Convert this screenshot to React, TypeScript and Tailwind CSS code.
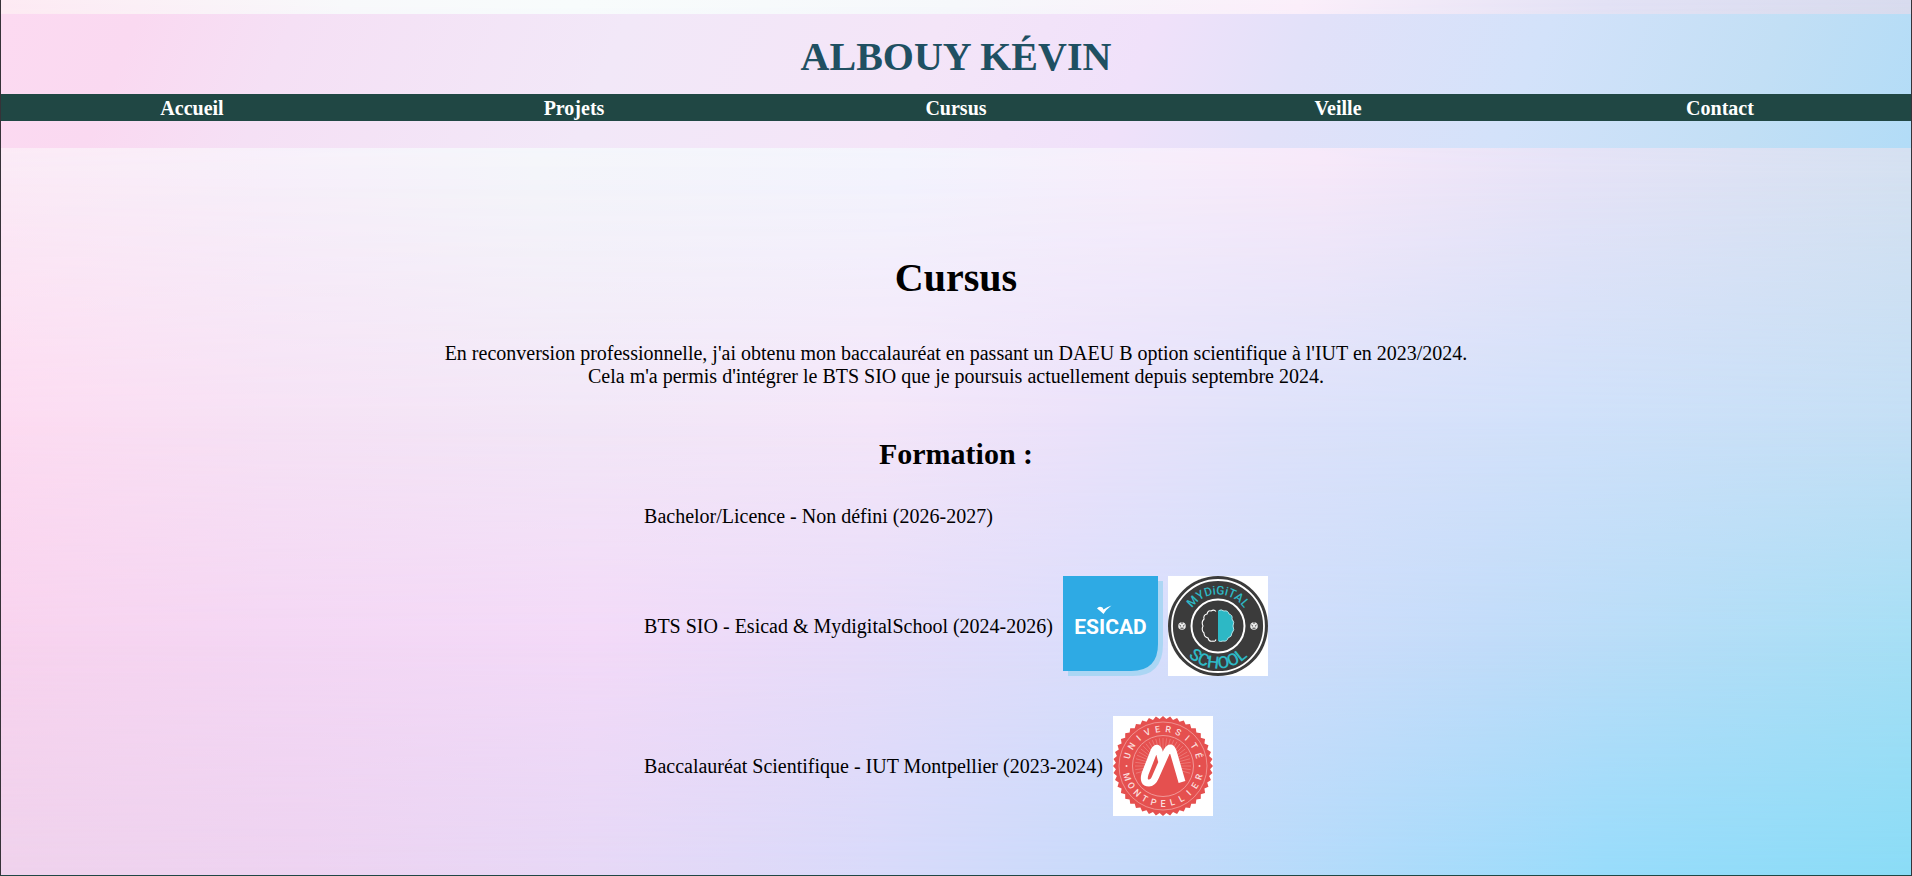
const links = ["Accueil", "Projets", "Cursus", "Veille", "Contact"];

const point = (radius: number, degrees: number) => {
  const a = (degrees * Math.PI) / 180;
  return `${(50 + radius * Math.sin(a)).toFixed(2)},${(50 - radius * Math.cos(a)).toFixed(2)}`;
};

const sealOutline = Array.from({ length: 88 }, (_, i) => point(i % 2 ? 47.2 : 50, (i * 360) / 88)).join(" ");

function Backdrop() {
  return (
    <div aria-hidden="true" className="absolute inset-0 -z-10">
      <div className="absolute inset-0 bg-[linear-gradient(90deg,#fdeaf3_0%,#f8f9fb_18%,#f8fcfc_30%,#f6f8fb_50%,#fbeffa_68%,#e3e2f5_84%,#d8dbee_100%)]" />
      <div className="absolute inset-0 bg-[linear-gradient(90deg,#fbeaf6_0%,#f7effa_14%,#f4f5fa_28%,#f3f3fd_47%,#f6edfb_60%,#f6e8f9_69%,#e6e3f7_82%,#d4e1f1_100%)] [mask-image:linear-gradient(180deg,transparent_0%,black_20%)]" />
      <div className="absolute inset-0 bg-[linear-gradient(90deg,#fddbf1_0%,#f6e2f5_14%,#f2e7f7_30%,#f4e6f9_46%,#ece2fa_56%,#dfe2fa_66%,#d0e1fa_82%,#c4dff5_100%)] [mask-image:linear-gradient(180deg,transparent_20%,black_48%)]" />
      <div className="absolute inset-0 bg-[linear-gradient(90deg,#f8d3ee_0%,#f4d7f4_14%,#f3daf8_31%,#e7dcf9_45%,#d8defc_60%,#c2dcf9_78%,#a6dff5_100%)] [mask-image:linear-gradient(180deg,transparent_48%,black_73%)]" />
      <div className="absolute inset-0 bg-[linear-gradient(90deg,#efd2ec_0%,#edd3f1_16%,#e6d8f6_31%,#d8dafa_46%,#c3dafa_61%,#98dcfb_84%,#8adcf6_100%)] [mask-image:linear-gradient(180deg,transparent_73%,black_100%)]" />
    </div>
  );
}

function EsicadLogo() {
  return (
    <svg role="img" aria-label="Esicad" viewBox="0 0 100 100" className="size-25 shrink-0">
      <path d="M5 5H100V68Q100 100 70 100H5Z" fill="#abd6f4" />
      <path d="M0 0H95V68Q95 95 68 95H0Z" fill="#2eaae4" />
      <text x="47.5" y="57.5" textAnchor="middle" fill="#fff" className="font-[Roboto,sans-serif] text-[21px] font-bold">
        ESICAD
      </text>
      <path d="M34 32.5Q36 29.5 39.5 31.5L40.5 33.5Q44 31 48.500 29.500Q43 33.500 40.500 38Q38 35.500 34 32.500Z" fill="#fff" />
    </svg>
  );
}

function SchoolBadge({ x }: { x: number }) {
  return (
    <g transform={`translate(${x} 50)`}>
      <circle r="3.800" fill="#e9e9e9" />
      <path d="M-2.500 -1L-1 .3M2.500 -1L1 .3M-1.500 2.200H1.500M0 -3.800V-2" stroke="#3b3b3b" strokeWidth="1" />
    </g>
  );
}

function SchoolLogo() {
  return (
    <svg role="img" aria-label="MyDigital School" viewBox="0 0 100 100" className="size-25 shrink-0 bg-white">
      <circle cx="50" cy="50" r="50" fill="#3b3b3b" />
      <circle cx="50" cy="50" r="46" fill="none" stroke="#fff" strokeWidth="1.800" />
      <circle cx="50" cy="50" r="26.500" fill="none" stroke="#fff" strokeWidth="2" />
      <path id="school-top" d="M18.500 50A31.500 31.500 0 0 1 81.500 50" fill="none" />
      <path id="school-bottom" d="M7.500 50A42.500 42.500 0 0 0 92.500 50" fill="none" />
      <text textAnchor="middle" fill="#2db8c5" className="font-[Roboto,sans-serif] text-[12px] font-medium">
        <textPath href="#school-top" startOffset="50%">MYDiGiTAL</textPath>
      </text>
      <text textAnchor="middle" fill="#2db8c5" className="font-[Roboto,sans-serif] text-[17px] font-medium">
        <textPath href="#school-bottom" startOffset="50%">SCHOOL</textPath>
      </text>
      <SchoolBadge x={14} />
      <SchoolBadge x={86} />
      <path
        d="M48 35.500Q46 33 43 35Q40 34 39 38Q35 39 36 43Q33 46 35 50Q33 54 36 57Q36 61 40 62Q41 66 45 65Q47 66 48 63.500"
        fill="none"
        stroke="#fff"
        strokeWidth="1.100"
      />
      <path
        d="M50 34.500Q53 33 56 35Q60 34 61 38Q65 39 64 43Q67 46 65 50Q67 54 64 57Q64 61 60 62Q59 66 55 65Q52 66 50 65Z"
        fill="#2db8c5"
      />
      <path
        d="M51 34.500Q53 33 56 35Q60 34 61 38Q65 39 64 43Q67 46 65 50Q67 54 64 57Q64 61 60 62Q59 66 55 65Q52 66 51 65"
        fill="none"
        stroke="#d5f1f4"
        strokeWidth=".8"
      />
    </svg>
  );
}

function MontpellierLogo() {
  return (
    <svg role="img" aria-label="Université Montpellier" viewBox="0 0 100 100" className="size-25 shrink-0 bg-white">
      <polygon points={sealOutline} fill="#e5504f" />
      <circle cx="50" cy="50" r="44" fill="none" stroke="#f3aaa9" strokeWidth=".7" />
      <circle cx="50" cy="50" r="30.500" fill="none" stroke="#f3aaa9" strokeWidth=".8" />
      {Array.from({ length: 29 }, (_, i) => (
        <path key={i} d="M50 22V36" transform={`rotate(${i * 7.5 - 105} 50 50)`} stroke="#ed8180" strokeWidth=".7" />
      ))}
      <g fill="#fbdedd" textAnchor="middle" className="font-[Roboto,sans-serif] text-[9px] font-medium">
        {"UNIVERSITÉ".split("").map((letter, i) => (
          <text key={i} x="50" y="16" transform={`rotate(${i * 16.4 - 74} 50 50)`}>
            {letter}
          </text>
        ))}
        {"MONTPELLIER".split("").map((letter, i) => (
          <text key={i} x="50" y="90.500" transform={`rotate(${73 - i * 14.6} 50 50)`}>
            {letter}
          </text>
        ))}
        <circle cx="13.500" cy="50" r="1" />
        <circle cx="86.500" cy="50" r="1" />
      </g>
      <path
        d="M48.500 45L46 35Q44 29.500 41 35L32 58Q29.500 67 36 67Q40 67 42.500 61L54 35Q57.500 29 60 35L69 66"
        fill="none"
        stroke="#fff"
        strokeWidth="7"
        strokeLinejoin="round"
      />
    </svg>
  );
}

export default function App() {
  return (
    <div className="relative isolate flex min-h-screen flex-col border-x border-b border-x-[#363238] border-b-[#204744] pt-3.5 font-['Liberation_Serif','Times_New_Roman',serif] text-[20px] leading-[23px] text-black">
      <Backdrop />
      <header className="bg-[linear-gradient(112deg,#fcdaf1_0%,#fad9f1_7%,#f5e0f5_15%,#f2e8f8_32%,#f4e5f8_48%,#f0e1fa_59%,#e2e1f9_67%,#d3e2fa_79%,#c2dff5_91%,#b2dcf7_100%)] pt-5 pb-[27px]">
        <h1 className="text-center text-[40px] leading-[46px] font-bold text-[#1f5062]">ALBOUY KÉVIN</h1>
        <nav className="mt-3.5 bg-[#204744] pt-[3px] pb-px">
          <ul className="grid grid-cols-5 text-center font-bold text-white">
            {links.map((link) => (
              <li key={link}>
                <a href={`#${link.toLowerCase()}`}>{link}</a>
              </li>
            ))}
          </ul>
        </nav>
      </header>
      <main className="flex flex-col items-center px-4 pt-[107px] pb-14">
        <h2 className="text-[40px] leading-[46px] font-bold">Cursus</h2>
        <p className="mt-[41px] text-center">
          En reconversion professionnelle, j'ai obtenu mon baccalauréat en passant un DAEU B option scientifique à l'IUT en
          2023/2024.
          <br />
          Cela m'a permis d'intégrer le BTS SIO que je poursuis actuellement depuis septembre 2024.
        </p>
        <h3 className="mt-[49px] text-[30px] leading-[34px] font-bold">Formation :</h3>
        <ul className="mt-[34px] flex flex-col gap-10">
          <li className="mb-2">Bachelor/Licence - Non défini (2026-2027)</li>
          <li className="flex items-center gap-2.5">
            BTS SIO - Esicad &amp; MydigitalSchool (2024-2026)
            <span className="flex gap-[5px]">
              <EsicadLogo />
              <SchoolLogo />
            </span>
          </li>
          <li className="flex items-center gap-2.5">
            Baccalauréat Scientifique - IUT Montpellier (2023-2024)
            <MontpellierLogo />
          </li>
        </ul>
      </main>
    </div>
  );
}
